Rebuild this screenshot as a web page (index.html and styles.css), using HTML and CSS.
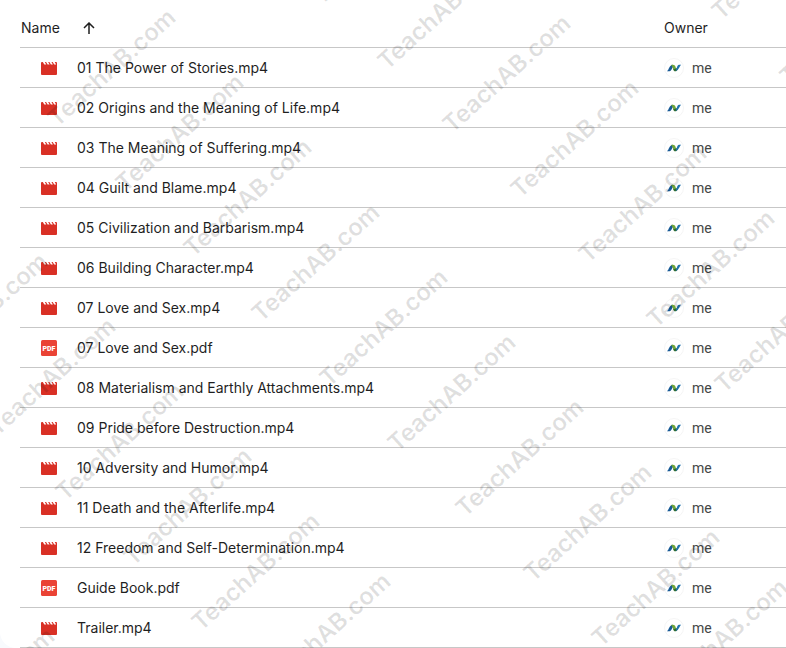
FILE: index.html
```html
<!DOCTYPE html>
<html lang="en">
<head>
    <meta charset="UTF-8">
    <meta name="viewport" content="width=device-width, initial-scale=1.0">
    <title>Files</title>
    <link rel="stylesheet" href="styles.css">
</head>
<body>
    <!-- Shared icons -->
    <svg class="sprites" aria-hidden="true">
        <symbol id="icon-video" viewBox="0 0 16 16">
            <path fill="#d93025" d="M1 2h.8l1.500 2.600h2L3.800 2h1.300l1.500 2.600h2L7.100 2h1.300l1.500 2.600h2L10.400 2h1.300l1.500 2.600h2L13.700 2H15a1 1 0 0 1 1 1V14a1 1 0 0 1-1 1H1a1 1 0 0 1-1-1V3a1 1 0 0 1 1-1z"/>
        </symbol>
        <symbol id="icon-pdf" viewBox="0 0 16 16">
            <rect width="16" height="16" rx="1.500" fill="#ea4335"/>
            <text x="8" y="10.500" text-anchor="middle" class="pdf-text">PDF</text>
        </symbol>
        <symbol id="icon-avatar" viewBox="0 0 20 20">
            <circle cx="10" cy="10" r="9.500" fill="#fff" stroke="#f5f5f5"/>
            <path fill="#185a96" d="M3 13.300c2-1.600 2.400-6.400 5.600-6.600L9.800 8C8.300 9 7.700 13.200 5.500 13.300z"/>
            <path fill="#6fa53a" d="M7 7.100c2.400-1 3.800-.3 4.400 1.400l.9 2.700-1.500 2.100C8.800 12.500 9.200 9 7 7.100z"/>
            <path fill="#2f6b35" d="M9.300 11c.6 3 3 3.100 4.400.5L12.200 10l-1 1z"/>
            <path fill="#1f72ad" d="M11.800 12c1.200-1.300 1.200-5.300 3.200-5.300h2.200c-1.600.8-2 5-4.900 6z"/>
        </symbol>
    </svg>

    <main>
        <table>
            <thead>
                <tr>
                    <th class="name">
                        <div class="cell">
                            Name
                            <button type="button" class="sort" aria-label="Reverse sort direction">
                                <svg viewBox="0 0 12 12"><path d="M6 12V1M1 6l5-5 5 5"/></svg>
                            </button>
                        </div>
                    </th>
                    <th class="owner">Owner</th>
                </tr>
            </thead>
            <tbody id="fileList">
                <!-- Filled in by the script -->
            </tbody>
        </table>
        <svg class="watermark" id="watermark" aria-hidden="true"></svg>
    </main>

    <script>
        const files = [
            '01 The Power of Stories.mp4',
            '02 Origins and the Meaning of Life.mp4',
            '03 The Meaning of Suffering.mp4',
            '04 Guilt and Blame.mp4',
            '05 Civilization and Barbarism.mp4',
            '06 Building Character.mp4',
            '07 Love and Sex.mp4',
            '07 Love and Sex.pdf',
            '08 Materialism and Earthly Attachments.mp4',
            '09 Pride before Destruction.mp4',
            '10 Adversity and Humor.mp4',
            '11 Death and the Afterlife.mp4',
            '12 Freedom and Self-Determination.mp4',
            'Guide Book.pdf',
            'Trailer.mp4'
        ];

        document.getElementById('fileList').innerHTML = files.map(name => {
            const icon = name.endsWith('.pdf') ? 'icon-pdf' : 'icon-video';
            return `
                <tr>
                    <td class="name">
                        <div class="cell">
                            <svg class="file-icon"><use href="#${icon}"/></svg>
                            <span>${name}</span>
                        </div>
                    </td>
                    <td class="owner">
                        <div class="cell">
                            <svg class="avatar"><use href="#icon-avatar"/></svg>
                            <span>me</span>
                        </div>
                    </td>
                </tr>
            `;
        }).join('');

        // Diagonal runs of the watermark: first mark of each run and how many follow
        const runs = [
            { x: 321, y: 6, count: 1 },
            { x: 387, y: 71, count: 1 },
            { x: 452, y: 134, count: 5 },
            { x: 57, y: 128, count: 9 },
            { x: 669, y: 698, count: 1 },
            { x: -71, y: 372, count: 5 },
            { x: 272, y: 692, count: 1 },
            { x: -64, y: 747, count: 1 },
            { x: 721, y: 21, count: 2 }
        ];

        let marks = '';
        runs.forEach(run => {
            for (let i = 0; i < run.count; i++) {
                const x = run.x + i * 68;
                const y = run.y + i * 65;
                marks += `<text transform="translate(${x} ${y}) rotate(-42)">TeachAB.com</text>`;
            }
        });
        document.getElementById('watermark').innerHTML = marks;
    </script>
</body>
</html>
```
FILE: styles.css
```css
body {
    margin: 0;
    font-family: Inter, sans-serif;
    font-size: 14px;
    line-height: 20px;
    color: #1f1f1f;
    background-color: #f8fafd;
}
.sprites {
    position: absolute;
    width: 0;
    height: 0;
}
main {
    position: relative;
    overflow: hidden;
    padding: 8px 0 0 20px;
    background-color: white;
    border-bottom-left-radius: 16px;
}
table {
    width: 100%;
    table-layout: fixed;
    border-collapse: separate;
    border-spacing: 0;
}
th, td {
    height: 39px;
    padding: 0;
    border-bottom: 1px solid #c7c7c7;
    text-align: left;
    font-weight: normal;
    white-space: nowrap;
}
th.owner {
    width: 122px;
}
.cell {
    display: flex;
    align-items: center;
}
th .cell {
    padding-left: 1px;
    gap: 23px;
}
.sort {
    width: 12px;
    height: 12px;
    padding: 0;
    border: 0;
    background: none;
    cursor: pointer;
}
.sort svg {
    display: block;
    fill: none;
    stroke: #1f1f1f;
    stroke-width: 1.5;
}
td.name .cell {
    padding-left: 21px;
    gap: 20px;
}
.file-icon {
    width: 16px;
    height: 16px;
}
.pdf-text {
    font: 900 7px Roboto, sans-serif;
    fill: white;
}
td.owner .cell {
    gap: 8px;
    font-family: Roboto, sans-serif;
    color: #444746;
}
.avatar {
    width: 20px;
    height: 20px;
}
.watermark {
    position: absolute;
    top: 0;
    left: 0;
    width: 100%;
    height: 100%;
    pointer-events: none;
}
.watermark text {
    font: 600 24px Inter, sans-serif;
    fill: black;
    fill-opacity: 0.12;
}
```
